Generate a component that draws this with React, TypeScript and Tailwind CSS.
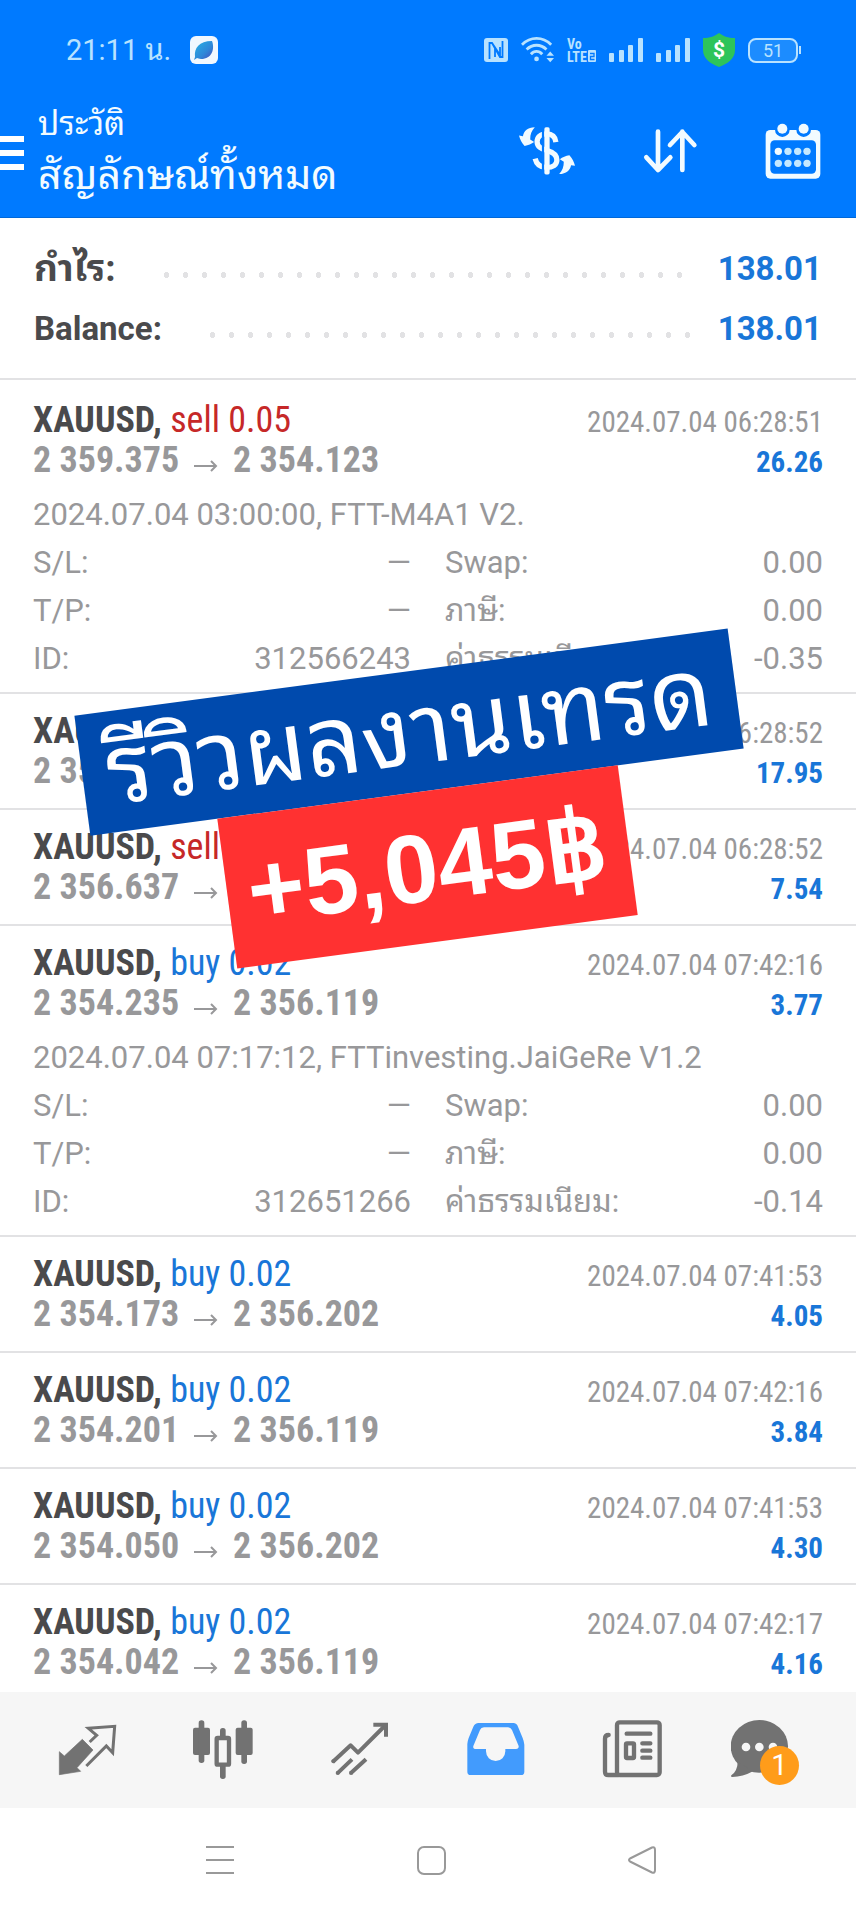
import React from 'react';

type Deal = {
  side: 'buy' | 'sell';
  volume: string;
  open: string;
  close: string;
  time: string;
  profit: string;
  details?: {
    comment: string;
    id: string;
    commission: string;
  };
};

const deals: Deal[] = [
  {
    side: 'sell',
    volume: '0.05',
    open: '2 359.375',
    close: '2 354.123',
    time: '2024.07.04 06:28:51',
    profit: '26.26',
    details: { comment: '2024.07.04 03:00:00, FTT-M4A1 V2.', id: '312566243', commission: '-0.35' },
  },
  { side: 'sell', volume: '0.03', open: '2 357.713', close: '2 354.123', time: '2024.07.04 06:28:52', profit: '17.95' },
  { side: 'sell', volume: '0.03', open: '2 356.637', close: '2 354.123', time: '2024.07.04 06:28:52', profit: '7.54' },
  {
    side: 'buy',
    volume: '0.02',
    open: '2 354.235',
    close: '2 356.119',
    time: '2024.07.04 07:42:16',
    profit: '3.77',
    details: { comment: '2024.07.04 07:17:12, FTTinvesting.JaiGeRe V1.2', id: '312651266', commission: '-0.14' },
  },
  { side: 'buy', volume: '0.02', open: '2 354.173', close: '2 356.202', time: '2024.07.04 07:41:53', profit: '4.05' },
  { side: 'buy', volume: '0.02', open: '2 354.201', close: '2 356.119', time: '2024.07.04 07:42:16', profit: '3.84' },
  { side: 'buy', volume: '0.02', open: '2 354.050', close: '2 356.202', time: '2024.07.04 07:41:53', profit: '4.30' },
  { side: 'buy', volume: '0.02', open: '2 354.042', close: '2 356.119', time: '2024.07.04 07:42:17', profit: '4.16' },
];

/* Status bar */

const Signal: React.FC = () => (
  <svg className="h-6 w-[34px]" viewBox="0 0 34 24" fill="#b8e2ff">
    <rect x="0" y="15" width="5" height="9" rx="1" />
    <rect x="10" y="12" width="5" height="12" rx="1" />
    <rect x="19" y="7" width="5" height="17" rx="1" />
    <rect x="29" y="0" width="5" height="24" rx="1" />
  </svg>
);

const StatusBar: React.FC = () => (
  <div className="flex h-[100px] items-center justify-between pl-[66px] pr-[55px] text-[#b8e2ff]">
    <div className="flex items-center gap-[19px]">
      <span className="text-[29px] leading-8">21:11 น.</span>
      <svg className="size-7" viewBox="0 0 28 28">
        <defs>
          <linearGradient id="leaf" x1="0" y1="0" x2="1" y2="1">
            <stop offset="0" stopColor="#27b4e6" />
            <stop offset="0.6" stopColor="#2f86d8" />
            <stop offset="1" stopColor="#4a49b8" />
          </linearGradient>
        </defs>
        <rect width="28" height="28" rx="6" fill="#f1f8ff" />
        <path d="M5 21C4 12 9 5 22 5C25 13 22 23 11 23C9 23 8 22 7 22L4 24Z" fill="url(#leaf)" />
      </svg>
    </div>
    <div className="flex items-center gap-[13px]">
      <svg className="size-6" viewBox="0 0 24 24">
        <rect width="24" height="24" rx="3" fill="#b8e2ff" />
        <path d="M5.500 21V5H8L16 17V9M11 9V19M8 5L16 19H18.500V3" fill="none" stroke="#007aff" strokeWidth="1.800" />
      </svg>
      <svg className="h-7 w-[33px]" viewBox="0 0 35 28" fill="none" stroke="#b8e2ff" strokeWidth="3">
        <path d="M1 8.500C10-.5 23-.5 32 8.500M6 13.500C12 7.500 21 7.500 27 13.500M10.500 18.500C14 14.500 19 14.500 22.500 18.500" />
        <circle cx="16.500" cy="23.500" r="2.500" fill="#b8e2ff" stroke="none" />
        <path d="M27 20L31 15.500L35 20ZM27 22.500L31 27L35 22.500Z" fill="#b8e2ff" stroke="none" />
      </svg>
      <svg
        className="h-7 w-[29px] font-['Roboto_Condensed','Liberation_Sans_Narrow',Roboto,sans-serif] text-[14px] font-bold"
        viewBox="0 0 29 28"
        fill="#b8e2ff"
      >
        <text x="0" y="13">Vo</text>
        <text x="0" y="26">LTE</text>
        <rect x="21" y="14" width="8" height="12" rx="1" />
        <path d="M23 17.500H27V20.500H23.500V23.500H27.500" fill="none" stroke="#007aff" strokeWidth="1.300" />
      </svg>
      <Signal />
      <Signal />
      <svg className="h-[34px] w-8" viewBox="0 0 32 34">
        <path d="M16 0C20 3 25 5 32 5V17C32 26 24 31 16 34C8 31 0 26 0 17V5C7 5 12 3 16 0Z" fill="#2ec45a" />
        <text x="16" y="24" textAnchor="middle" fill="#fff" fontSize="21" fontWeight="700">$</text>
      </svg>
      <div className="flex items-center gap-px">
        <span className="flex h-[25px] w-[50px] items-center justify-center rounded-lg border-2 border-[#b8e2ff] bg-[#1c8cff] text-[18px]">
          51
        </span>
        <span className="h-2 w-0.5 bg-[#b8e2ff]"></span>
      </div>
    </div>
  </div>
);

/* Toolbar */

const CurrencyIcon: React.FC = () => (
  <svg className="size-[56px]" viewBox="0 0 170 170" fill="#f2fbff">
    <path
      d="M112 58C110 42 100 33 84 33C64 33 55 43 55 57C55 73 68 78 84 83C104 89 115 97 115 112C115 127 102 135 84 135C64 135 53 125 49 108"
      fill="none"
      stroke="#f2fbff"
      strokeWidth="16"
    />
    <path d="M73 13V156" stroke="#007aff" strokeWidth="7" />
    <rect x="77" y="13" width="16" height="143" rx="5" />
    <path d="M48 13C26 14 15 24 12 40L0 38C3 50 8 60 17 70C28 68 38 64 46 58L34 50C34 34 38 24 48 13Z" />
    <path d="M122 155C144 154 155 144 158 128L170 130C167 118 162 108 153 98C142 100 132 104 124 110L136 118C136 134 132 144 122 155Z" />
  </svg>
);

const SortIcon: React.FC = () => (
  <svg
    className="size-[56px]"
    viewBox="0 0 168 168"
    fill="none"
    stroke="#f2fbff"
    strokeWidth="14"
    strokeLinecap="round"
    strokeLinejoin="round"
  >
    <path d="M48 26V141M13 103L48 141L85 103" />
    <path d="M121 141V26M84 66L121 27L157 66" />
  </svg>
);

const CalendarIcon: React.FC = () => (
  <svg className="size-[56px]" viewBox="0 0 168 168">
    <rect x="2" y="21" width="164" height="146" rx="14" fill="#f2fbff" />
    <rect x="16" y="52" width="137" height="100" rx="13" fill="#007aff" />
    <path d="M30 12V20A22 22 0 0 0 74 20V12ZM94 12V20A22 22 0 0 0 138 20V12Z" fill="#007aff" />
    <g fill="#f2fbff">
      <circle cx="52" cy="17" r="15" />
      <circle cx="116" cy="17" r="15" />
      <circle cx="40" cy="85" r="11" />
    </g>
    <g fill="#c4e8ff">
      <circle cx="69" cy="85" r="11" />
      <circle cx="98" cy="85" r="11" />
      <circle cx="126" cy="85" r="11" />
      <circle cx="40" cy="121" r="11" />
      <circle cx="69" cy="121" r="11" />
      <circle cx="98" cy="121" r="11" />
      <circle cx="126" cy="121" r="11" />
    </g>
  </svg>
);

const Toolbar: React.FC = () => (
  <div className="flex h-[117px] items-start justify-between pr-[35px]">
    <div className="flex h-[102px] items-center gap-[14px]">
      <button aria-label="Menu" className="flex flex-col gap-2 pt-1">
        <span className="h-[6px] w-6 bg-white"></span>
        <span className="h-[6px] w-6 bg-white"></span>
        <span className="h-[6px] w-6 bg-white"></span>
      </button>
      <h1 className="text-[#f2fbff]">
        <span className="block text-[33px] leading-[48px]">ประวัติ</span>
        <span className="block text-[41px] leading-[54px]">สัญลักษณ์ทั้งหมด</span>
      </h1>
    </div>
    <div className="flex h-[102px] items-center gap-[67px]">
      <button aria-label="Currency"><CurrencyIcon /></button>
      <button aria-label="Sort"><SortIcon /></button>
      <button aria-label="Calendar"><CalendarIcon /></button>
    </div>
  </div>
);

/* Totals */

const TotalRow: React.FC<{ label: React.ReactNode; value: string }> = ({ label, value }) => (
  <div className="flex h-[60px] items-center">
    <span className="text-[33px] font-bold leading-10 text-[#4a4a4c]">{label}</span>
    <span className="ml-[41px] mr-6 mt-3 h-[6px] flex-1 bg-[radial-gradient(circle,#e2e2e4_3px,transparent_3px)] bg-[length:19px_6px]"></span>
    <span className="text-[33px] font-bold leading-10 text-[#1976d8]">{value}</span>
  </div>
);

/* Deal list */

const DetailRow: React.FC<{ label: string; value: string }> = ({ label, value }) => (
  <div className="flex justify-between">
    <dt>{label}</dt>
    <dd>{value}</dd>
  </div>
);

const DealRow: React.FC<{ deal: Deal }> = ({ deal }) => (
  <li
    className={`border-t-2 border-[#e2e2e4] px-[33px] pt-[17px] first:pt-5 last:pb-[10px] ${
      deal.details ? 'pb-[9px]' : 'pb-[17px]'
    }`}
  >
    <div className="font-['Roboto_Condensed','Liberation_Sans_Narrow',Roboto,sans-serif] leading-10">
      <div className="flex h-10 items-baseline justify-between">
        <span className="text-[36px]">
          <b className="font-bold text-[#4a4a4c]">XAUUSD,</b>{' '}
          <span className={deal.side === 'buy' ? 'text-[#1976d8]' : 'text-[#c62828]'}>
            {deal.side} {deal.volume}
          </span>
        </span>
        <time className="text-[29px] text-[#98989a]">{deal.time}</time>
      </div>
      <div className="flex h-10 items-baseline justify-between font-bold">
        <span className="flex items-baseline gap-[15px] text-[36px] text-[#98989a]">
          {deal.open}
          <svg className="h-3 w-6" viewBox="0 0 24 12" fill="none" stroke="#98989a" strokeWidth="2">
            <path d="M0 6H22M17 1L22 6L17 11" />
          </svg>
          {deal.close}
        </span>
        <span className="text-[29px] text-[#1976d8]">{deal.profit}</span>
      </div>
    </div>
    {deal.details && (
      <div className="mt-[11px] text-[31px] leading-[48px] text-[#98989a]">
        <p>{deal.details.comment}</p>
        <dl className="grid grid-cols-2 gap-x-[34px]">
          <DetailRow label="S/L:" value="—" />
          <DetailRow label="Swap:" value="0.00" />
          <DetailRow label="T/P:" value="—" />
          <DetailRow label="ภาษี:" value="0.00" />
          <DetailRow label="ID:" value={deal.details.id} />
          <DetailRow label="ค่าธรรมเนียม:" value={deal.details.commission} />
        </dl>
      </div>
    )}
  </li>
);

/* Bottom tabs */

const TradeIcon: React.FC = () => (
  <svg className="size-[60px]" viewBox="0 0 180 180">
    <path d="M7 95L22 108L76 58L108 90L60 143L71 154L7 164Z" fill="#727272" stroke="#727272" strokeWidth="2" />
    <path d="M98 66L119 46L94 25L173 19L167 98L148 78L88 138" fill="none" stroke="#727272" strokeWidth="9" />
  </svg>
);

const ChartIcon: React.FC = () => (
  <svg className="size-[60px]" viewBox="0 0 180 180" fill="#727272">
    <rect x="0" y="23" width="51" height="82" rx="6" />
    <rect x="17" y="1" width="17" height="128" rx="8" />
    <rect x="128" y="23" width="51" height="82" rx="6" />
    <rect x="145" y="1" width="17" height="131" rx="8" />
    <rect x="81" y="24" width="17" height="34" rx="8" />
    <rect x="81" y="130" width="17" height="47" rx="8" />
    <rect x="71" y="54" width="37" height="80" rx="3" fill="#f6f6f6" stroke="#727272" strokeWidth="13" />
  </svg>
);

const TrendIcon: React.FC = () => (
  <svg className="size-[60px]" viewBox="0 0 180 180" fill="none" stroke="#727272" strokeWidth="12">
    <path d="M8 126L62 76L84 98L164 18" strokeLinejoin="round" />
    <path d="M130 14H168V50" />
    <path d="M22 160L66 118M62 160L108 118" />
    <g fill="#727272" stroke="none">
      <circle cx="10" cy="124" r="6" />
      <circle cx="23" cy="159" r="6" />
      <circle cx="63" cy="159" r="6" />
    </g>
  </svg>
);

const HistoryIcon: React.FC = () => (
  <svg className="size-[60px]" viewBox="0 0 180 180" fill="#429bfd" fillRule="evenodd">
    <path d="M4 155V72Q5 62 8 54L22 20Q27 9 38 9H142Q152 9 156 20L170 54Q174 64 175 74V155Q175 165 165 165H14Q4 165 4 155ZM42 30Q45 22 54 22H126Q134 22 138 30L158 78Q159 87 150 87H118V94A29 29 0 0 1 60 94V87H30Q20 87 22 78Z" />
  </svg>
);

const NewsIcon: React.FC = () => (
  <svg className="size-[60px]" viewBox="0 0 180 180" fill="none" stroke="#727272" strokeWidth="13" strokeLinecap="round">
    <rect x="45" y="7" width="128" height="158" rx="8" />
    <path d="M20 45Q9 45 9 56V155Q9 165 19 165H50" />
    <path d="M74 41H145M121 70H145M121 92H145M121 113H145" />
    <rect x="72" y="70" width="24" height="44" rx="3" />
  </svg>
);

const ChatIcon: React.FC = () => (
  <span className="relative block h-[60px] w-[76px]">
    <svg className="h-[60px] w-[76px]" viewBox="0 0 228 180" fill="#727272">
      <ellipse cx="85" cy="79" rx="86" ry="79" />
      <path d="M20 125Q20 152 1 166Q-2 171 4 171Q35 171 66 154Z" />
      <g fill="#f6f6f6">
        <circle cx="45" cy="81" r="13" />
        <circle cx="85" cy="81" r="13" />
        <circle cx="126" cy="81" r="13" />
      </g>
    </svg>
    <span className="absolute left-[29px] top-[26px] flex size-[39px] items-center justify-center rounded-full bg-[#ff9c1a] text-[29px] leading-none text-white">
      1
    </span>
  </span>
);

const tabs = [
  { label: 'Trade', icon: <TradeIcon /> },
  { label: 'Charts', icon: <ChartIcon /> },
  { label: 'Trends', icon: <TrendIcon /> },
  { label: 'History', icon: <HistoryIcon /> },
  { label: 'News', icon: <NewsIcon /> },
  { label: 'Messages', icon: <ChatIcon /> },
];

const TabBar: React.FC = () => (
  <nav className="flex h-[116px] items-center bg-[#f6f6f6] px-[19px]">
    {tabs.map((tab) => (
      <button key={tab.label} aria-label={tab.label} className="flex flex-1 justify-center">
        {tab.icon}
      </button>
    ))}
  </nav>
);

const SystemNav: React.FC = () => (
  <div className="flex h-[104px] items-center bg-white pl-[114px] pr-[108px]">
    <button aria-label="Recent apps" className="flex flex-1 justify-center">
      <svg className="size-[30px]" viewBox="0 0 30 30" stroke="#999" strokeWidth="2">
        <path d="M1 2H29M1 15H29M1 28H29" />
      </svg>
    </button>
    <button aria-label="Home" className="flex flex-1 justify-center">
      <svg className="size-[30px]" viewBox="0 0 30 30" fill="none" stroke="#999" strokeWidth="2">
        <rect x="2" y="2" width="27" height="27" rx="6" />
      </svg>
    </button>
    <button aria-label="Back" className="flex flex-1 justify-center">
      <svg className="size-[30px]" viewBox="0 0 30 30" fill="none" stroke="#999" strokeWidth="2" strokeLinejoin="round">
        <path d="M3 13.500L25 2.500Q28 1.500 28 5V25Q28 28.500 25 27.500L3 16.500Q1 15 3 13.500Z" />
      </svg>
    </button>
  </div>
);

const App: React.FC = () => {
  return (
    <div className="relative min-h-screen overflow-hidden bg-white font-[Roboto,'Noto_Sans_Thai_Looped','Droid_Sans_Thai',Loma,Garuda,Waree,Umpush,Sarabun,'Noto_Serif_Thai','Noto_Sans_Thai',sans-serif]">
      <header className="border-b border-[#0068d9] bg-[#007aff]">
        <StatusBar />
        <Toolbar />
      </header>

      <main>
        <section className="px-[34px] pb-[19px] pt-[21px]">
          <TotalRow label={<span className="text-[37px]">กำไร:</span>} value="138.01" />
          <TotalRow label="Balance:" value="138.01" />
        </section>
        <ul>
          {deals.map((deal, i) => (
            <DealRow key={i} deal={deal} />
          ))}
        </ul>
      </main>

      <TabBar />
      <SystemNav />

      {/* Promo stickers */}
      <div className="absolute left-[49%] top-[671px] flex -translate-x-1/2 -rotate-[7.6deg] flex-col items-center whitespace-nowrap text-white">
        <p className="flex h-[121px] w-[659px] items-center justify-center bg-[#004aad] text-[97px]">รีวิวผลงานเทรด</p>
        <p className="flex h-[151px] w-[404px] items-center justify-center bg-[#ff3131] font-['Liberation_Sans',sans-serif] text-[97px] font-bold">
          +5,045฿
        </p>
      </div>
    </div>
  );
};

export default App;
